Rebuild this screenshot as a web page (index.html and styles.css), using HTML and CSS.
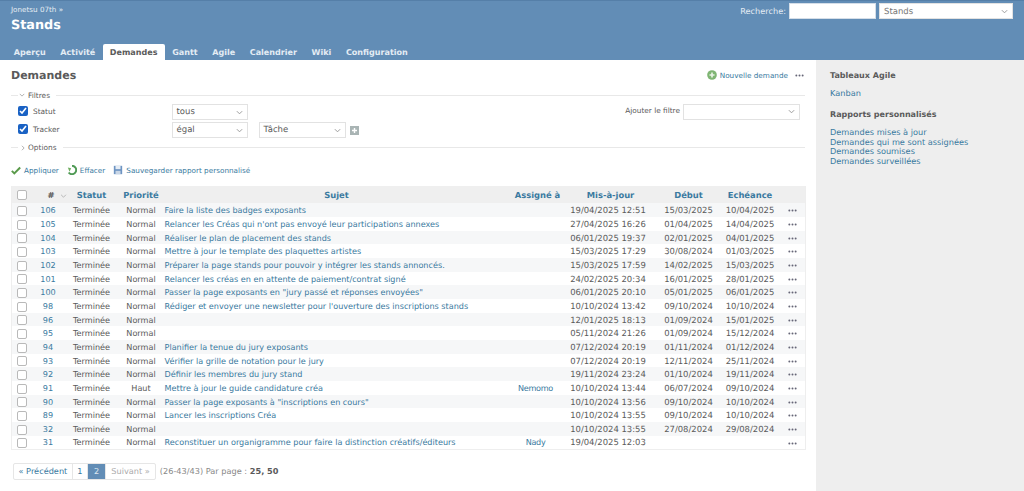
FILE: index.html
```html
<!DOCTYPE html>
<html lang="fr">

<head>
    <meta charset="UTF-8" />
    <title>Demandes - Stands</title>
    <link rel="stylesheet" href="styles.css">
</head>

<body>
    <header class="header">
        <div class="header-top">
            <div>
                <div class="parent">Jonetsu 07th »</div>
                <h1>Stands</h1>
            </div>
            <div class="search">
                <label>Recherche:</label>
                <input class="search-input" type="text" />
                <div class="select search-select"><span>Stands</span>
                    <svg class="chev" viewBox="0 0 8 5"><path d="M1 1l3 3 3-3" /></svg>
                </div>
            </div>
        </div>
        <nav class="tabs">
            <a href="#">Aperçu</a>
            <a href="#">Activité</a>
            <a href="#" class="selected">Demandes</a>
            <a href="#">Gantt</a>
            <a href="#">Agile</a>
            <a href="#">Calendrier</a>
            <a href="#">Wiki</a>
            <a href="#">Configuration</a>
        </nav>
    </header>

    <div class="main">
        <div class="content">
            <div class="title-row">
                <h2>Demandes</h2>
                <div class="contextual">
                    <svg class="ico" viewBox="0 0 12 12">
                        <circle cx="6" cy="6" r="5.8" fill="#7fb573" />
                        <path d="M6 3v6M3 6h6" stroke="#e9f3e5" stroke-width="2" />
                    </svg>
                    <a href="#">Nouvelle demande</a>
                    <svg class="dots big" viewBox="0 0 10 3"><circle cx="1.5" cy="1.5" r="1.1" /><circle cx="5" cy="1.5" r="1.1" /><circle cx="8.5" cy="1.5" r="1.1" /></svg>
                </div>
            </div>

            <div class="legend"><svg class="leg-chev" viewBox="0 0 8 5"><path d="M1 1l3 3 3-3" /></svg><span>Filtres</span></div>
            <div class="filters">
                <div class="filter-list">
                    <div class="filter-row">
                        <label class="field"><input type="checkbox" checked />Statut</label>
                        <div class="select op"><span>tous</span>
                            <svg class="chev" viewBox="0 0 8 5"><path d="M1 1l3 3 3-3" /></svg>
                        </div>
                    </div>
                    <div class="filter-row">
                        <label class="field"><input type="checkbox" checked />Tracker</label>
                        <div class="select op"><span>égal</span>
                            <svg class="chev" viewBox="0 0 8 5"><path d="M1 1l3 3 3-3" /></svg>
                        </div>
                        <div class="select val"><span>Tâche</span>
                            <svg class="chev" viewBox="0 0 8 5"><path d="M1 1l3 3 3-3" /></svg>
                        </div>
                        <svg class="plus" viewBox="0 0 9 9">
                            <rect width="9" height="9" fill="#a9b4b4" />
                            <path d="M4.5 2v5M2 4.5h5" stroke="#fff" stroke-width="1.4" />
                        </svg>
                    </div>
                </div>
                <div class="add-filter">
                    <label>Ajouter le filtre</label>
                    <div class="select add"><span></span>
                        <svg class="chev" viewBox="0 0 8 5"><path d="M1 1l3 3 3-3" /></svg>
                    </div>
                </div>
            </div>
            <div class="legend options"><svg class="leg-chev side" viewBox="0 0 5 8"><path d="M1 1l3 3-3 3" /></svg><span>Options</span></div>

            <div class="actions">
                <a href="#">
                    <svg class="ico" viewBox="0 0 12 12"><path d="M1 7l3 3 7-7" fill="none" stroke="#5a9a4a" stroke-width="2.4" /></svg>
                    Appliquer
                </a>
                <a href="#">
                    <svg class="ico" viewBox="0 0 12 12">
                        <path d="M6 1a5 5 0 1 1-4 8" fill="none" stroke="#4f9a55" stroke-width="2.4" />
                        <path d="M1 3l4 1-2 4z" fill="#6fae5f" />
                    </svg>
                    Effacer
                </a>
                <a href="#">
                    <svg class="ico" viewBox="0 0 12 12">
                        <rect x="1" y="1" width="10" height="10" fill="#6e94c2" />
                        <rect x="3" y="1" width="6" height="4" fill="#e6edf5" />
                        <rect x="3" y="7" width="6" height="4" fill="#c9d6e6" />
                    </svg>
                    Sauvegarder rapport personnalisé
                </a>
            </div>

            <table class="issues">
                <colgroup>
                    <col class="c-check"><col class="c-id"><col class="c-status"><col class="c-prio">
                    <col class="c-subject"><col class="c-assigned"><col class="c-updated"><col class="c-date">
                    <col class="c-date2"><col class="c-menu">
                </colgroup>
                <thead>
                    <tr>
                        <th><span class="box"></span></th>
                        <th class="id-head"># <svg class="sort" viewBox="0 0 8 5"><path d="M1 1l3 3 3-3" /></svg></th>
                        <th>Statut</th>
                        <th>Priorité</th>
                        <th>Sujet</th>
                        <th>Assigné à</th>
                        <th>Mis-à-jour</th>
                        <th>Début</th>
                        <th>Echéance</th>
                        <th></th>
                    </tr>
                </thead>
                <tbody id="rows"></tbody>
            </table>

            <div class="pagination">
                <div class="pages">
                    <a href="#">« Précédent</a>
                    <a href="#">1</a>
                    <span class="current">2</span>
                    <span class="off">Suivant »</span>
                </div>
                <span class="count">(26-43/43) Par page : <b>25, 50</b></span>
            </div>
        </div>

        <aside class="sidebar">
            <h3>Tableaux Agile</h3>
            <p><a href="#">Kanban</a></p>
            <h3>Rapports personnalisés</h3>
            <ul>
                <li><a href="#">Demandes mises à jour</a></li>
                <li><a href="#">Demandes qui me sont assignées</a></li>
                <li><a href="#">Demandes soumises</a></li>
                <li><a href="#">Demandes surveillées</a></li>
            </ul>
        </aside>
    </div>

    <script src="rows.js"></script>
</body>

</html>
```

FILE: rows.js
```js
// id, priorite, sujet, assigne, maj, debut, echeance
const demandes = [
    [106, 'Normal', 'Faire la liste des badges exposants', '', '19/04/2025 12:51', '15/03/2025', '10/04/2025'],
    [105, 'Normal', "Relancer les Créas qui n'ont pas envoyé leur participations annexes", '', '27/04/2025 16:26', '01/04/2025', '14/04/2025'],
    [104, 'Normal', 'Réaliser le plan de placement des stands', '', '06/01/2025 19:37', '02/01/2025', '04/01/2025'],
    [103, 'Normal', 'Mettre à jour le template des plaquettes artistes', '', '15/03/2025 17:29', '30/08/2024', '01/03/2025'],
    [102, 'Normal', 'Préparer la page stands pour pouvoir y intégrer les stands annoncés.', '', '15/03/2025 17:59', '14/02/2025', '15/03/2025'],
    [101, 'Normal', 'Relancer les créas en en attente de paiement/contrat signé', '', '24/02/2025 20:34', '16/01/2025', '28/01/2025'],
    [100, 'Normal', 'Passer la page exposants en "jury passé et réponses envoyées"', '', '06/01/2025 20:10', '05/01/2025', '06/01/2025'],
    [98, 'Normal', "Rédiger et envoyer une newsletter pour l'ouverture des inscriptions stands", '', '10/10/2024 13:42', '09/10/2024', '10/10/2024'],
    [96, 'Normal', '', '', '12/01/2025 18:13', '01/09/2024', '15/01/2025'],
    [95, 'Normal', '', '', '05/11/2024 21:26', '01/09/2024', '15/12/2024'],
    [94, 'Normal', 'Planifier la tenue du jury exposants', '', '07/12/2024 20:19', '01/11/2024', '01/12/2024'],
    [93, 'Normal', 'Vérifier la grille de notation pour le jury', '', '07/12/2024 20:19', '12/11/2024', '25/11/2024'],
    [92, 'Normal', 'Définir les membres du jury stand', '', '19/11/2024 23:24', '01/10/2024', '19/11/2024'],
    [91, 'Haut', 'Mettre à jour le guide candidature créa', 'Nemomo', '10/10/2024 13:44', '06/07/2024', '09/10/2024'],
    [90, 'Normal', 'Passer la page exposants à "inscriptions en cours"', '', '10/10/2024 13:56', '09/10/2024', '10/10/2024'],
    [89, 'Normal', 'Lancer les inscriptions Créa', '', '10/10/2024 13:55', '09/10/2024', '10/10/2024'],
    [32, 'Normal', '', '', '10/10/2024 13:55', '27/08/2024', '29/08/2024'],
    [31, 'Normal', 'Reconstituer un organigramme pour faire la distinction créatifs/éditeurs', 'Nady', '19/04/2025 12:03', '', '']
];

const dots = '<svg class="dots" viewBox="0 0 10 3"><circle cx="1.5" cy="1.5" r="1.1" /><circle cx="5" cy="1.5" r="1.1" /><circle cx="8.5" cy="1.5" r="1.1" /></svg>';

const tbody = document.getElementById('rows');
tbody.innerHTML = demandes.map(d => `
    <tr>
        <td><span class="box"></span></td>
        <td><a href="#">${d[0]}</a></td>
        <td>Terminée</td>
        <td>${d[1]}</td>
        <td class="subject"><a href="#">${d[2]}</a></td>
        <td class="assigned"><a href="#">${d[3]}</a></td>
        <td class="date updated">${d[4]}</td>
        <td class="date">${d[5]}</td>
        <td class="date">${d[6]}</td>
        <td>${dots}</td>
    </tr>`).join('');
```

FILE: styles.css
```css
* {
    box-sizing: border-box;
    margin: 0;
    padding: 0;
}

body {
    font-family: "DejaVu Sans", Verdana, sans-serif;
    font-size: 8.2px;
    text-rendering: geometricPrecision;
    color: #5a5a5a;
    background: #fff;
    min-height: 100vh;
    display: flex;
    flex-direction: column;
}

a {
    color: #3a7aa0;
    text-decoration: none;
}

/* Bandeau du haut */
.header {
    background: #628db6;
    border-top: 1px solid #557fa8;
    color: #fff;
    height: 60px;
    flex-shrink: 0;
    display: flex;
    flex-direction: column;
    justify-content: space-between;
}

.header-top {
    display: flex;
    justify-content: space-between;
    padding: 4px 11px 0;
}

.parent {
    font-size: 7.2px;
    color: #e6edf4;
    line-height: 10px;
}

h1 {
    font-size: 12.8px;
    line-height: 18px;
    margin-top: 2px;
}

.search {
    display: flex;
    align-items: center;
    gap: 3px;
    height: 16px;
    margin-top: -2px;
    color: #e3ebf3;
}

.search-input {
    width: 87px;
    height: 16px;
    border: 1px solid #d5dee8;
    background: #fff;
}

.select {
    display: flex;
    align-items: center;
    justify-content: space-between;
    height: 15.5px;
    padding: 0 4px 0 4px;
    background: #fff;
    border: 1px solid #e2e2e2;
    color: #5a5a5a;
    font-size: 8.5px;
}

.search-select {
    width: 134px;
    height: 16px;
    padding-top: 1px;
    color: #777;
}

.chev {
    width: 7px;
    height: 5px;
    fill: none;
    stroke: #999;
    stroke-width: 1.1;
}

.tabs {
    display: flex;
    padding-left: 6.5px;
    height: 16px;
}

.tabs a {
    font-weight: bold;
    font-size: 8.05px;
    color: #e4ecf4;
    padding: 0 7.3px;
    line-height: 18px;
    white-space: nowrap;
}

.tabs a.selected {
    background: #fff;
    color: #5a5a5a;
    border-radius: 2px 2px 0 0;
}

/* Contenu */
.main {
    flex: 1;
    display: flex;
}

.content {
    width: 816px;
    padding: 0 11px;
}

.title-row {
    display: flex;
    justify-content: space-between;
    align-items: center;
    height: 30px;
}

h2 {
    font-size: 11px;
    color: #5a5a5a;
}

.contextual {
    display: flex;
    align-items: center;
    gap: 3px;
    font-size: 7.25px;
    margin-right: 1px;
}

.ico {
    width: 10px;
    height: 10px;
    flex-shrink: 0;
}

.dots {
    width: 9px;
    height: 3px;
    fill: #667;
    vertical-align: middle;
}

.dots.big {
    margin-left: 4px;
}

.legend {
    display: flex;
    align-items: center;
    gap: 3px;
    height: 10px;
    font-size: 7.4px;
    padding-left: 8px;
    position: relative;
}

.legend span {
    background: #fff;
    padding-right: 3px;
}

.legend::after {
    content: "";
    flex: 1;
    border-top: 1px solid #e8e8e8;
}

.legend::before {
    content: "";
    position: absolute;
    left: 0;
    width: 7px;
    border-top: 1px solid #e8e8e8;
}

.leg-chev {
    width: 6px;
    height: 4px;
    fill: none;
    stroke: #999;
}

.leg-chev.side {
    width: 4px;
    height: 6px;
    margin-left: 2px;
}

.filters {
    display: flex;
    justify-content: space-between;
    padding: 4px 5px 0 7px;
}

.filter-row {
    display: flex;
    align-items: center;
    gap: 11px;
    height: 16px;
    margin-bottom: 2px;
}

.field {
    display: flex;
    align-items: center;
    gap: 5px;
    width: 143px;
    margin-right: -0.5px;
    margin-top: -2px;
    font-size: 7.4px;
}

.field input {
    width: 10px;
    height: 10px;
    accent-color: #1a62c4;
    margin: 0;
}

.op {
    width: 76px;
}

.val {
    width: 87px;
}

.plus {
    width: 9px;
    height: 9px;
    margin-left: -7px;
}

.add-filter {
    display: flex;
    align-items: flex-start;
    gap: 3px;
    font-size: 7.35px;
    line-height: 14px;
}

.select.add {
    width: 117px;
}

.options {
    margin-top: 2.5px;
}

.actions {
    display: flex;
    gap: 8px;
    margin-top: 11.5px;
    height: 12px;
    font-size: 7.25px;
    align-items: center;
}

.actions a {
    display: flex;
    align-items: center;
    gap: 3px;
}

/* Tableau */
.issues {
    width: 794px;
    table-layout: fixed;
    border-collapse: collapse;
    margin-top: 10px;
    border: 1px solid #eee;
    border-top: 0;
}

.c-check { width: 22px; }
.c-id { width: 29px; }
.c-status { width: 58px; }
.c-prio { width: 41px; }
.c-subject { width: 350px; }
.c-assigned { width: 52px; }
.c-updated { width: 94px; }
.c-date { width: 62px; }
.c-date2 { width: 61px; }
.c-menu { width: 25px; }

.issues th {
    height: 17px;
    background: #efefef;
    color: #3a7aa0;
    font-size: 8.4px;
    text-align: center;
    white-space: nowrap;
}

.issues td {
    height: 14px;
    line-height: 12px;
    text-align: center;
    white-space: nowrap;
    font-size: 8.1px;
}

/* 13.67px de moyenne par ligne */
.issues tbody tr:nth-child(3n) td {
    height: 13px;
}

.issues td.date {
    font-size: 8.45px;
}

.issues td.updated {
    padding-right: 5px;
}

.issues td.assigned {
    padding-right: 4px;
    letter-spacing: -0.3px;
}

.issues tbody tr:nth-child(odd) {
    background: #f6f7f8;
}

.issues td.subject {
    text-align: left;
    padding-left: 3px;
}

.box {
    display: inline-block;
    width: 10px;
    height: 10px;
    margin-right: 2px;
    background: #fff;
    border: 1px solid #b9b9b9;
    border-radius: 2px;
    vertical-align: middle;
}

.issues th.id-head {
    color: #5a5a5a;
    padding-left: 14px;
}

.sort {
    width: 7px;
    height: 4px;
    margin-left: 3px;
    fill: none;
    stroke: #aaa;
}

/* Pagination */
.pagination {
    display: flex;
    align-items: center;
    gap: 4px;
    margin-top: 13px;
    margin-left: 2px;
}

.pages {
    display: flex;
    height: 17px;
    line-height: 15px;
    border: 1px solid #e6e6e6;
    border-radius: 2px;
}

.pages a,
.pages span {
    padding: 0 5px;
    border-right: 1px solid #e6e6e6;
}

.pages a {
    padding: 0 4.5px;
}

.pages :last-child {
    border-right: 0;
}

.pages .current {
    background: #628db6;
    color: #dfe8f1;
    padding: 0 6px;
}

.pages .off {
    color: #aaa;
}

.count {
    color: #888;
}

.count b {
    color: #5a5a5a;
}

/* Colonne de droite */
.sidebar {
    width: 208px;
    background: #eeeeee;
    padding: 10px 14px;
}

.sidebar h3 {
    font-size: 8px;
    color: #5a5a5a;
    line-height: 12px;
}

.sidebar p {
    margin: 5px 0 10px;
    line-height: 12px;
}

.sidebar ul {
    list-style: none;
    margin-top: 7px;
}

.sidebar li {
    line-height: 9.6px;
}
```
